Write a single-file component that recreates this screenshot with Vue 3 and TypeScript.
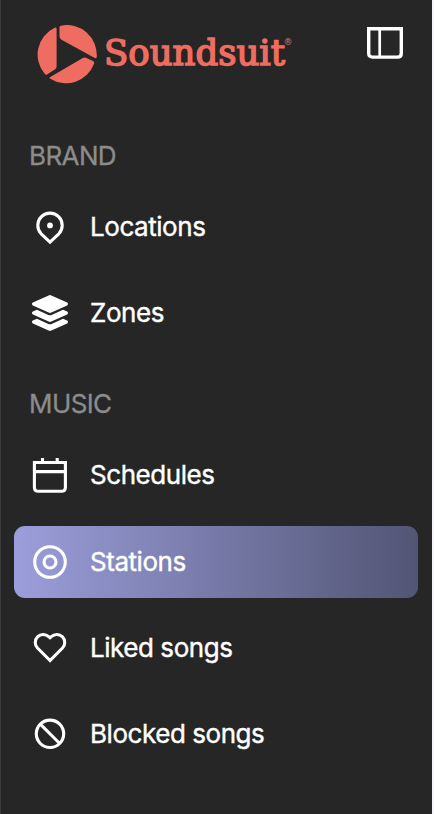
<script setup lang="ts">
type IconName = 'pin' | 'layers' | 'calendar' | 'disc' | 'heart' | 'block'

interface NavItem {
  label: string
  icon: IconName
  active?: boolean
}

interface NavSection {
  title: string
  items: NavItem[]
}

const sections: NavSection[] = [
  {
    title: 'BRAND',
    items: [
      { label: 'Locations', icon: 'pin' },
      { label: 'Zones', icon: 'layers' },
    ],
  },
  {
    title: 'MUSIC',
    items: [
      { label: 'Schedules', icon: 'calendar' },
      { label: 'Stations', icon: 'disc', active: true },
      { label: 'Liked songs', icon: 'heart' },
      { label: 'Blocked songs', icon: 'block' },
    ],
  },
]
</script>

<template>
  <aside class="sidebar">
    <header class="header">
      <div class="brand">
        <svg class="mark" viewBox="0 0 60 60">
          <path d="M17.6 2.7Q19.6 2 19.6 4V41.6Q19.6 43.3 18.2 44.2L10 49.4Q8.8 50.2 7.8 49.1A29.9 29.9 0 0 1 17.6 2.7Z" />
          <path d="M22.5 2.4Q22.5 1 23.8 .7A29.9 29.9 0 0 1 59.7 32.2Q59.4 33.8 57.8 33L24.5 14.8Q22.5 13.6 22.5 11.6Z" />
          <path d="M13.2 53.8Q12 52.9 13.3 52.1L45.8 33Q47.4 32.1 49 32.8L56 36Q57.8 37 57 38.8A29.9 29.9 0 0 1 13.2 53.8Z" />
        </svg>
        <svg class="wordmark" viewBox="0 0 190 44">
          <text class="word" x="0" y="32.8" textLength="181" lengthAdjust="spacingAndGlyphs">Soundsuit</text>
          <text class="reg" x="179.5" y="13.4">®</text>
        </svg>
      </div>
      <svg class="toggle" viewBox="0 0 36 32">
        <path d="M1.7 1.7H34.3V26.2Q34.3 30.1 30.4 30.1H5.6Q1.7 30.1 1.7 26.2Z" />
        <path class="thin" d="M12.7 2V30" />
      </svg>
    </header>

    <nav>
      <section v-for="section in sections" :key="section.title" class="section">
        <h2 class="title">{{ section.title }}</h2>
        <ul class="list">
          <li v-for="item in section.items" :key="item.label" class="item" :class="{ active: item.active }">
            <svg class="icon" viewBox="0 0 40 40">
              <template v-if="item.icon === 'pin'">
                <path d="M20 35.2L11.2 26.8A12.2 12.2 0 1 1 28.8 26.8Z" />
                <circle class="solid" cx="20" cy="18.4" r="2.9" />
              </template>
              <g v-else-if="item.icon === 'layers'" class="solid" transform="translate(2 2) scale(.0703)">
                <path d="M12.41 148.02l232.94 105.67c6.8 3.09 14.49 3.09 21.29 0l232.94-105.67c16.55-7.51 16.55-32.52 0-40.03L266.65 2.31a25.607 25.607 0 0 0-21.29 0L12.41 107.98c-16.55 7.51-16.55 32.53 0 40.04z" />
                <path d="M499.59 236.3l-58.09-26.33-161.64 73.27c-7.56 3.43-15.59 5.17-23.86 5.17s-16.29-1.74-23.86-5.17L70.51 209.97l-58.1 26.33c-16.55 7.5-16.55 32.5 0 40l232.94 105.59c6.8 3.08 14.49 3.08 21.29 0L499.59 276.3c16.55-7.5 16.55-32.5 0-40z" />
                <path d="M499.59 364.1l-57.87-26.23-161.86 73.37c-7.56 3.43-15.59 5.17-23.86 5.17s-16.29-1.74-23.86-5.17L70.29 337.87 12.41 364.1c-16.55 7.5-16.55 32.5 0 40l232.94 105.59c6.8 3.08 14.49 3.08 21.29 0L499.59 404.1c16.55-7.5 16.55-32.5 0-40z" />
              </g>
              <template v-else-if="item.icon === 'calendar'">
                <path d="M4.4 7.5H35.4V32.2Q35.4 36.3 31.3 36.3H8.5Q4.4 36.3 4.4 32.2Z" />
                <path d="M4.4 16.6H35.4M12.5 3V8M27.2 3V8" />
              </template>
              <template v-else-if="item.icon === 'disc'">
                <circle cx="20" cy="20" r="15.3" />
                <circle cx="20" cy="20" r="6" />
              </template>
              <path
                v-else-if="item.icon === 'heart'"
                d="M20 32.5L7.5 20C4.5 16.8 4.5 12 7.5 8.9C10.7 5.8 15.5 5.8 18.7 8.7L20 9.8L21.3 8.7C24.5 5.8 29.3 5.8 32.5 8.9C35.5 12 35.5 16.8 32.5 20Z"
              />
              <template v-else>
                <circle cx="20" cy="19.8" r="13.7" />
                <path d="M10.3 10.1L29.7 29.5" />
              </template>
            </svg>
            <span class="label">{{ item.label }}</span>
          </li>
        </ul>
      </section>
    </nav>
  </aside>
</template>

<style>
body {
  background: #f5f5fb;
}
</style>

<style scoped>
.sidebar {
  box-sizing: border-box;
  width: 432px;
  height: 814px;
  padding: 24px 14px 0 13px;
  border-left: 1px solid #3a3a3a;
  background: #262626;
  color: #fff;
  font-family: Inter, 'Liberation Sans', sans-serif;
  font-size: 26px;
  overflow: hidden;
}

.header {
  display: flex;
  justify-content: space-between;
  align-items: flex-start;
  height: 112px;
  padding: 0 15px 0 22.5px;
}

.brand {
  display: flex;
  gap: 7.5px;
}

.mark {
  width: 60px;
  height: 60px;
  margin-top: 0.5px;
  fill: #ef6d60;
}

.wordmark {
  width: 190px;
  height: 44px;
  margin-top: 8px;
  fill: #ef6d60;
  overflow: visible;
}

.word {
  font: 34.5px 'DejaVu Serif', serif;
  stroke: #ef6d60;
  stroke-width: 1.5px;
}

.reg {
  font: 9px 'DejaVu Sans', sans-serif;
}

.toggle {
  width: 36px;
  height: 32px;
  margin-top: 3px;
  fill: none;
  stroke: #fff;
  stroke-width: 3.4;
}

.thin {
  stroke-width: 2.7;
}

.section {
  height: 248.2px;
}

.title {
  height: 40px;
  margin: 0 0 15.1px;
  padding-left: 15px;
  color: #8c8c8c;
  font-size: 26px;
  font-weight: 400;
  line-height: 40px;
  letter-spacing: -0.6px;
  -webkit-text-stroke: 0.3px #8c8c8c;
}

.list {
  display: flex;
  flex-direction: column;
  gap: 14.3px;
  margin: 0;
  padding: 0;
  list-style: none;
}

.item {
  display: flex;
  align-items: center;
  gap: 20px;
  height: 72px;
  padding-left: 16px;
  border-radius: 11px;
}

.active {
  background: linear-gradient(90deg, #9b9eda, #525574);
}

.icon {
  width: 40px;
  height: 40px;
  flex: none;
  fill: none;
  stroke: #fff;
  stroke-width: 3.1;
}

.solid {
  fill: #fff;
  stroke: none;
}

.label {
  font-weight: 400;
  line-height: 40px;
  letter-spacing: -0.45px;
  white-space: nowrap;
  -webkit-text-stroke: 0.4px #fff;
}
</style>
